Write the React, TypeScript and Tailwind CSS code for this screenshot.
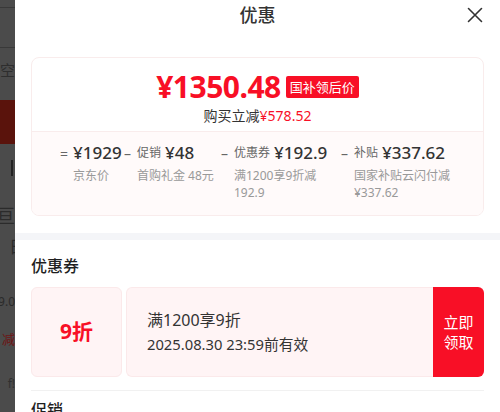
import React from 'react';

const RED = 'text-[#f80f26]';

function DimmedPage() {
  // the page behind the sheet, only a thin slice shows on the left
  return (
    <div className="w-[15px] h-[412px] shrink-0 overflow-hidden bg-[#4b4b4b] flex flex-col text-[#2b2b2b]">
      <div className="h-[7px] shrink-0" />
      <div className="h-px shrink-0 bg-[#393939]" />
      <div className="h-[39px] shrink-0" />
      <div className="h-px shrink-0 bg-[#393939]" />
      <div className="h-[12px] shrink-0" />
      <div className="h-[20px] shrink-0 flex justify-end whitespace-nowrap text-[15px] leading-[20px] text-[#2e2e2e]">时空</div>
      <div className="h-[20px] shrink-0" />
      <div className="h-[44px] shrink-0 bg-[#5a130c]" />
      <div className="h-[16px] shrink-0" />
      <div className="h-[16px] shrink-0 flex justify-end pr-[2px]"><div className="w-[2px] h-[16px] bg-[#222]" /></div>
      <div className="h-[28px] shrink-0" />
      <div className="h-[24px] shrink-0 flex justify-end whitespace-nowrap text-[19px] leading-[24px]">亘</div>
      <div className="h-[8px] shrink-0" />
      <div className="h-[22px] shrink-0 flex justify-start pl-[9px] whitespace-nowrap text-[17px] leading-[22px]">日</div>
      <div className="h-[36px] shrink-0" />
      <div className="h-[16px] shrink-0 flex justify-end whitespace-nowrap text-[12px] leading-[16px] text-[#2a2a2a]">9.0</div>
      <div className="h-[20px] shrink-0" />
      <div className="h-[18px] shrink-0 flex justify-end whitespace-nowrap text-[13px] leading-[18px] text-[#6e1414]">减</div>
      <div className="h-[28px] shrink-0" />
      <div className="h-[16px] shrink-0 flex justify-end whitespace-nowrap text-[12px] leading-[16px] text-[#303030]">f!</div>
    </div>
  );
}

interface Part {
  op: string;
  label?: string;
  amount: string;
  sub: string[];
  width: string;
}

const parts: Part[] = [
  { op: '=', amount: '¥1929', sub: ['京东价'], width: 'w-[64px]' },
  { op: '–', label: '促销', amount: '¥48', sub: ['首购礼金 48元'], width: 'w-[97px]' },
  { op: '–', label: '优惠券', amount: '¥192.9', sub: ['满1200享9折减', '192.9'], width: 'w-[120px]' },
  { op: '–', label: '补贴', amount: '¥337.62', sub: ['国家补贴云闪付减', '¥337.62'], width: 'flex-1' },
];

export default function App() {
  return (
    <div className="flex w-[500px] h-[412px] overflow-hidden font-['Noto_Sans','Noto_Sans_CJK_SC',sans-serif]">
      <DimmedPage />

      <div className="flex-1 bg-white flex flex-col overflow-hidden">
        <div className="shrink-0 h-[30px] grid grid-cols-[1fr_auto_1fr] items-center">
          <div />
          <h1 className="text-[18px] leading-[30px] font-medium text-[#333]">优惠</h1>
          <div className="flex justify-end pr-[17px]">
            <svg width="16" height="16" viewBox="0 0 16 16" fill="none" stroke="#333" strokeWidth="1.6" strokeLinecap="round">
              <path d="M1.5 1.5l13 13M14.5 1.5l-13 13" />
            </svg>
          </div>
        </div>

        <div className="shrink-0 mt-[27px] mx-4 border border-[#f9ecec] rounded-lg overflow-hidden">
          <div className="h-[73px] pt-[10px] flex flex-col items-center">
            <div className="flex items-center gap-[5px] h-[38px]">
              <span className={`text-[30px] leading-[38px] font-bold tracking-[-0.5px] ${RED}`}>¥1350.48</span>
              <span className="bg-[#f80f26] text-white text-[13px] leading-[22px] px-[4px] rounded-[2px]">国补领后价</span>
            </div>
            <div className="text-[14px] leading-[20px] text-[#333]">
              购买立减<span className={RED}>¥578.52</span>
            </div>
          </div>

          <div className="h-[84px] border-t border-[#f9ecec] bg-[#fffafa] pl-[28px] pt-[9px] flex">
            {parts.map(p => (
              <div key={p.amount} className={`${p.width} flex flex-col`}>
                <div className="flex items-center h-[24px] whitespace-nowrap">
                  <span className="w-[13px] text-[14px] text-[#666]">{p.op}</span>
                  {p.label && <span className="text-[12px] text-[#666] mr-[4px]">{p.label}</span>}
                  <span className="text-[17px] font-medium text-[#333]">{p.amount}</span>
                </div>
                <div className="mt-[2px] pl-[13px] text-[12px] leading-[17px] text-[#999] whitespace-nowrap">
                  {p.sub.map(s => <div key={s}>{s}</div>)}
                </div>
              </div>
            ))}
          </div>
        </div>

        <div className="shrink-0 mt-[17px] h-[7px] bg-[#f4f5f8]" />

        <h2 className="shrink-0 mt-[15px] px-4 text-[16px] leading-[22px] font-medium text-[#1f1f1f]">优惠券</h2>

        <div className="shrink-0 mt-[10px] mx-4 h-[90px] flex gap-[4px]">
          <div className="w-[91px] bg-[#fff4f5] border border-[#fbe9ea] rounded-md flex items-center justify-center">
            <span className={`text-[21px] font-bold ${RED}`}>9折</span>
          </div>
          <div className="flex-1 flex">
            <div className="flex-1 bg-[#fff4f5] border border-r-0 border-[#fbe9ea] rounded-l-md pl-[20px] flex flex-col justify-center">
              <div className="text-[16px] leading-[24px] text-[#333]">满1200享9折</div>
              <div className="text-[14.75px] leading-[24px] text-[#333]">2025.08.30 23:59前有效</div>
            </div>
            <button
              type="button"
              className="w-[51px] bg-[#f80f26] rounded-r-md text-white text-[15px] leading-[20px] flex items-center justify-center"
            >
              立即<br />领取
            </button>
          </div>
        </div>

        <div className="shrink-0 mt-[13px] mx-4 h-px bg-[#f1f1f1]" />

        <h2 className="shrink-0 mt-[8px] px-4 text-[16px] leading-[22px] font-medium text-[#1f1f1f]">促销</h2>
      </div>
    </div>
  );
}
